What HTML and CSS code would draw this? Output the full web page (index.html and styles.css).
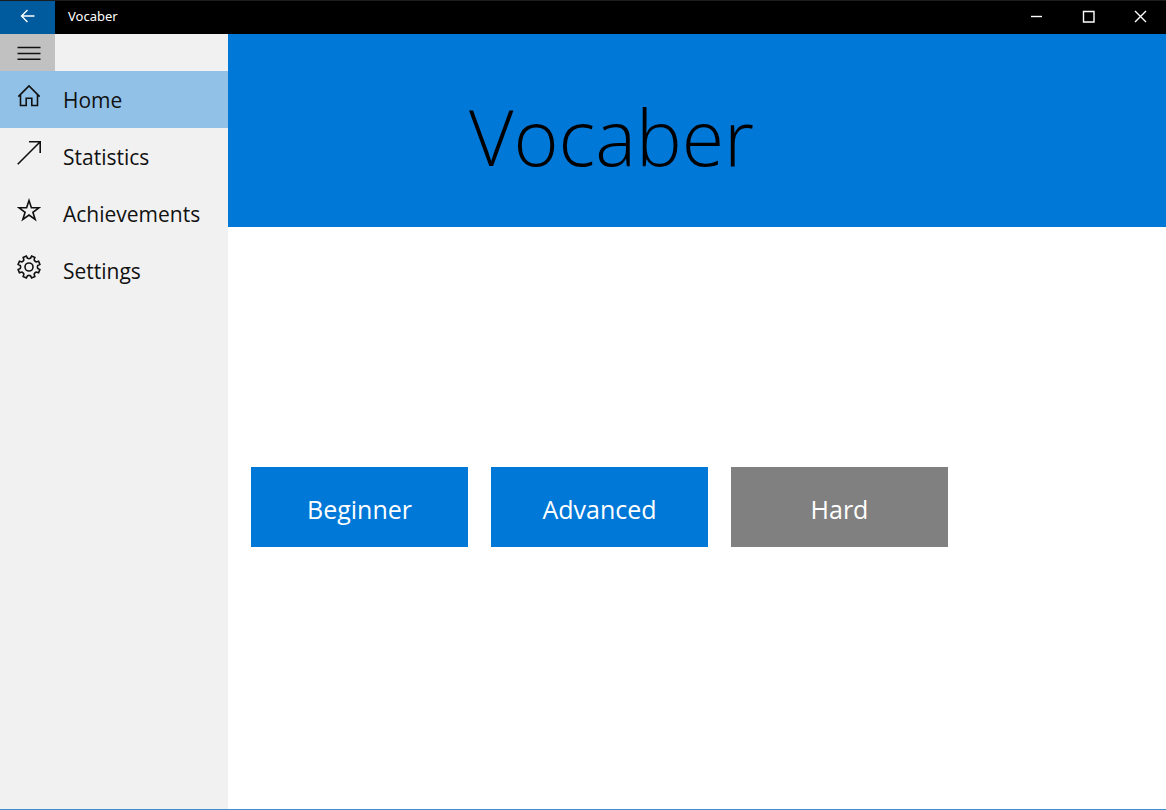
FILE: index.html
```html
<!DOCTYPE html>
<html lang="en">
<head>
<meta charset="utf-8">
<meta name="viewport" content="width=device-width, initial-scale=1">
<title>Vocaber</title>
<link rel="stylesheet" href="styles.css">
</head>
<body>
<div class="window">
  <header class="titlebar">
    <button class="back" type="button" aria-label="Back">
      <svg width="16" height="14" viewBox="0 0 16 14"><path d="M14.5 7H1.5M7.5 1L1.5 7l6 6"/></svg>
    </button>
    <span class="titlebar-name">Vocaber</span>
    <button class="caption" type="button" aria-label="Minimize">
      <svg width="13" height="13" viewBox="0 0 13 13"><path d="M1 6.5h11"/></svg>
    </button>
    <button class="caption" type="button" aria-label="Maximize">
      <svg width="13" height="13" viewBox="0 0 13 13"><path d="M1.5 1.5h10.500v10.500H1.5z"/></svg>
    </button>
    <button class="caption" type="button" aria-label="Close">
      <svg width="13" height="13" viewBox="0 0 13 13"><path d="M1 1l11 11M12 1L1 12"/></svg>
    </button>
  </header>
  <div class="body">
    <nav class="sidebar" aria-label="Main">
      <button class="menu" type="button" aria-label="Menu">
        <svg width="24" height="14" viewBox="0 0 24 14"><path d="M0.500 1.500h23M0.500 7.500h23M0.500 13.300h23"/></svg>
      </button>
      <a class="item item-active" href="#home" aria-current="page">
        <svg class="icon" width="24" height="24" viewBox="0 0 24 24"><path d="M1.300 12.600L12 2l10.700 10.600M3.500 10.700v10.800h5.700v-7.300h5.600v7.300h5.700V10.700"/></svg>
        <span>Home</span>
      </a>
      <a class="item" href="#statistics">
        <svg class="icon" width="24" height="24" viewBox="0 0 24 24"><path d="M0.700 23.300L23.200 0.800M12 0.800h11.200V12"/></svg>
        <span>Statistics</span>
      </a>
      <a class="item" href="#achievements">
        <svg class="icon" width="24" height="24" viewBox="0 0 24 24"><path d="M12 2.600l2.400 7.200h7.500l-6 4.500 2.300 7.200-6.200-4.400-6.200 4.400 2.300-7.200-6-4.500h7.500z"/></svg>
        <span>Achievements</span>
      </a>
      <a class="item" href="#settings">
        <svg class="icon" width="24" height="24" viewBox="-12 -12 24 24"><circle r="4"/><path d="M1.450-8.680L2.610-10.890 5.850-9.550 5.110-7.160Q5.700-5.700 7.160-5.110L9.550-5.850 10.890-2.610 8.680-1.450Q8 0 8.680 1.450L10.890 2.610 9.550 5.850 7.160 5.110Q5.700 5.700 5.110 7.160L5.850 9.550 2.610 10.890 1.450 8.680Q0 8-1.450 8.680L-2.610 10.890-5.850 9.550-5.110 7.160Q-5.700 5.700-7.160 5.110L-9.550 5.850-10.890 2.610-8.680 1.450Q-8 0-8.680-1.450L-10.890-2.610-9.550-5.850-7.160-5.110Q-5.700-5.700-5.110-7.160L-5.850-9.550-2.610-10.890-1.450-8.680Q0-8 1.450-8.680z"/></svg>
        <span>Settings</span>
      </a>
    </nav>
    <main class="main">
      <div class="hero"><h1 class="hero-title">Vocaber</h1></div>
      <div class="levels">
        <button class="level" type="button">Beginner</button>
        <button class="level" type="button">Advanced</button>
        <button class="level level-locked" type="button">Hard</button>
      </div>
    </main>
  </div>
</div>
</body>
</html>
```
FILE: styles.css
```css
* { box-sizing: border-box; }
body {
  margin: 0;
  font-family: "Open Sans", "Noto Sans", sans-serif;
  color: #111;
  background: #fff;
}
button {
  border: 0;
  padding: 0;
  font: inherit;
  color: inherit;
}
svg {
  display: block;
  fill: none;
  stroke: currentColor;
  stroke-width: 1.4;
}
.window {
  min-height: 100vh;
  display: flex;
  flex-direction: column;
  border-bottom: 1px solid #3c8fd0;
}
.titlebar {
  display: flex;
  height: 34px;
  background: #000;
  color: #fff;
  border-top: 1px solid #1c1c1c;
}
.back {
  width: 55px;
  padding-bottom: 3px;
  display: grid;
  place-items: center;
  background: #005a9e;
}
.titlebar-name {
  flex: 1;
  padding-left: 13px;
  font-family: "Noto Sans", sans-serif;
  font-size: 13px;
  line-height: 30px;
}
.caption {
  width: 52px;
  padding-bottom: 3px;
  display: grid;
  place-items: center;
  background: none;
}
.body {
  flex: 1;
  display: flex;
}
.sidebar {
  flex: none;
  width: 228px;
  background: #f1f1f1;
}
.menu {
  width: 55px;
  height: 37px;
  display: grid;
  place-items: center;
  padding-left: 3px;
  background: #c1c1c1;
}
.item {
  display: flex;
  gap: 22px;
  height: 57px;
  padding-left: 17px;
  color: inherit;
  text-decoration: none;
  font-size: 21px;
  line-height: 59px;
}
.item-active { background: #91c1e7; }
.icon {
  margin-top: 13px;
  stroke-width: 1.6;
}
.main {
  flex: 1;
  display: flex;
  flex-direction: column;
}
.hero {
  height: 193px;
  padding-left: 241px;
  background: #0078d7;
}
.hero-title {
  margin: 0;
  padding-top: 48px;
  font-size: 77px;
  font-weight: 300;
  line-height: 110px;
  color: #000;
}
.levels {
  flex: 1;
  display: flex;
  align-items: center;
  gap: 23px;
  padding: 0 23px 23px;
}
.level {
  width: 217px;
  height: 80px;
  padding-top: 4px;
  background: #0078d7;
  color: #fff;
  font-size: 25px;
}
.level-locked { background: #808080; }
```
